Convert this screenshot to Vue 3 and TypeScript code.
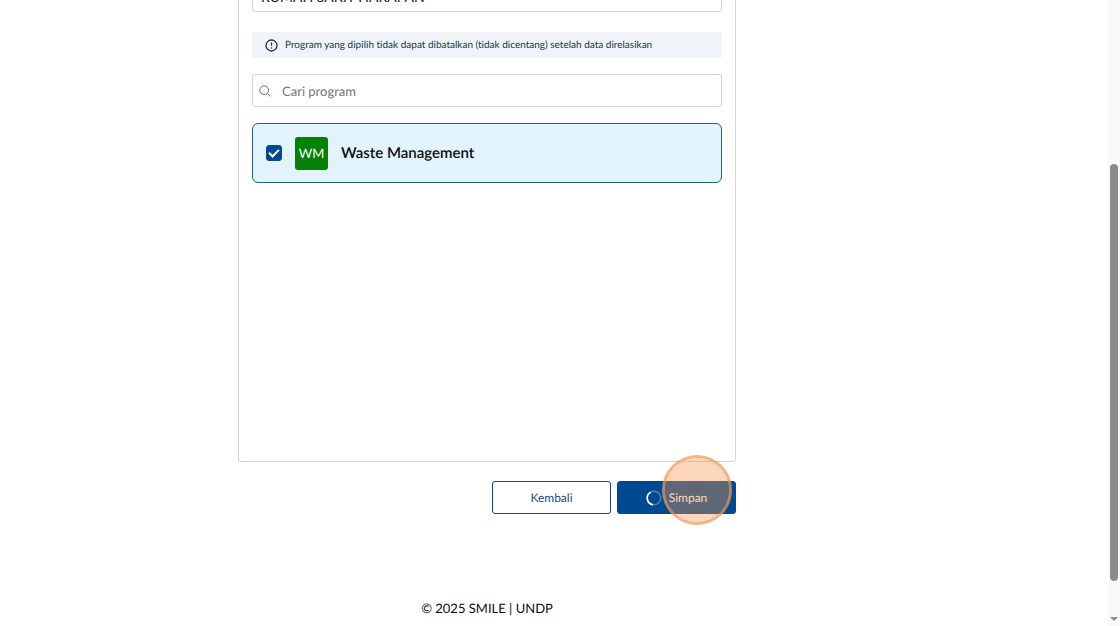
<script setup lang="ts">
import { ref } from 'vue'

interface Program {
  id: number
  code: string
  name: string
  checked: boolean
}

const entity = ref('RUMAH SAKIT HARAPAN')
const keyword = ref('')
const programs = ref<Program[]>([
  { id: 1, code: 'WM', name: 'Waste Management', checked: true },
])
</script>

<template>
  <div class="viewport">
    <main class="page">
      <form class="form" @submit.prevent>
        <section class="panel">
          <input v-model="entity" class="field entity" type="text" aria-label="Nama entitas" />
          <p class="notice">
            <svg class="notice-icon" viewBox="0 0 14 14" aria-hidden="true">
              <circle cx="7" cy="7" r="5.9" />
              <path d="M7 3.8v3.6M7 8.8v1.5" />
            </svg>
            <span>Program yang dipilih tidak dapat dibatalkan (tidak dicentang) setelah data direlasikan</span>
          </p>
          <div class="field search">
            <svg class="search-icon" viewBox="0 0 12 12" aria-hidden="true">
              <circle cx="5.2" cy="5.2" r="4.4" />
              <path d="M8.4 8.4l3 3" />
            </svg>
            <input v-model="keyword" type="text" placeholder="Cari program" aria-label="Cari program" />
          </div>
          <label v-for="program in programs" :key="program.id" class="program">
            <input v-model="program.checked" type="checkbox" />
            <span class="code">{{ program.code }}</span>
            <span class="name">{{ program.name }}</span>
          </label>
        </section>
        <div class="actions">
          <button class="button back" type="button">Kembali</button>
          <button class="button save" type="submit">
            <svg class="spinner" viewBox="0 0 16 16" aria-hidden="true">
              <circle class="track" cx="8" cy="8" r="6.8" />
              <path d="M7 14.7A6.8 6.8 0 0 1 4.6 2.1" />
            </svg>
            <span>Simpan</span>
            <span class="click-marker" aria-hidden="true"></span>
          </button>
        </div>
      </form>
      <footer>© 2025 SMILE | UNDP</footer>
    </main>
    <div class="scrollbar" aria-hidden="true">
      <span class="thumb"></span>
      <span class="arrow"></span>
    </div>
  </div>
</template>

<style>
body {
  margin: 0;
  background: #fff;
}
</style>

<style scoped>
* {
  box-sizing: border-box;
}

.viewport {
  display: flex;
  height: 100vh;
  overflow: hidden;
  font-family: Lato, "Liberation Sans", sans-serif;
  font-variant-ligatures: none;
  text-rendering: geometricPrecision;
  color: #0c0c0c;
}

.page {
  flex: 1;
  min-width: 0;
  padding-left: 238px;
}

.form,
footer {
  width: 100%;
  max-width: 498px;
}

.panel {
  display: flex;
  flex-direction: column;
  height: 483px;
  margin-top: -21px;
  padding: 0 13px;
  border: 1px solid #d4d4d4;
  border-radius: 3px;
}

input,
button {
  font: inherit;
  text-rendering: inherit;
}

.field {
  flex: none;
  width: 100%;
  height: 33px;
  border: 1px solid #d4d4d4;
  border-radius: 3px;
  background: #fff;
}

.field.entity {
  height: 32px;
  padding: 0 8px;
  font-size: 14px;
  color: #222;
}

.notice {
  display: flex;
  align-items: center;
  gap: 7px;
  height: 26px;
  margin: 20px 0 16px;
  padding: 0 13px;
  border-radius: 3px;
  background: #f0f4f9;
  color: #173744;
  font-size: 10px;
}

svg {
  flex: none;
  fill: none;
}

.notice-icon {
  width: 13px;
  height: 13px;
  stroke: #173744;
  stroke-width: 1.4;
}

.search {
  display: flex;
  align-items: center;
  gap: 11px;
  padding: 0 6px;
}

.search-icon {
  width: 12px;
  height: 12px;
  stroke: #6b7280;
}

.search input {
  flex: 1;
  min-width: 0;
  padding: 0;
  border: 0;
  outline: 0;
  background: none;
  font-size: 13px;
}

.search input::placeholder {
  color: #737373;
  opacity: 1;
}

.program {
  display: flex;
  align-items: center;
  gap: 13px;
  height: 60px;
  margin-top: 16px;
  padding: 0 13px;
  border: 1px solid #23608a;
  border-radius: 6px;
  background: #e2f3fc;
}

.program input {
  appearance: none;
  display: grid;
  place-items: center;
  width: 16px;
  height: 16px;
  margin: 0;
  border: 1px solid #004990;
  border-radius: 3px;
}

.program input:checked {
  background: #004990;
}

.program input:checked::after {
  content: "";
  width: 8px;
  height: 4px;
  margin-bottom: 3px;
  border: solid #fff;
  border-width: 0 0 2px 2px;
  transform: rotate(-45deg);
}

.code {
  width: 33px;
  border-radius: 3px;
  background: #068006;
  color: #fff;
  font-size: 13px;
  line-height: 33px;
  text-align: center;
}

.name {
  font-size: 15px;
  font-weight: 600;
}

.actions {
  display: flex;
  justify-content: flex-end;
  gap: 6px;
  margin-top: 19px;
}

.button {
  position: relative;
  display: flex;
  align-items: center;
  justify-content: center;
  gap: 7px;
  width: 119px;
  height: 33px;
  padding: 0;
  border: 1px solid #004990;
  border-radius: 3px;
  font-size: 12px;
}

.back {
  background: #fff;
  color: #1b4f7c;
}

.save {
  background: #004990;
  color: #fff;
}

.spinner {
  width: 16px;
  height: 16px;
  stroke: #fff;
  stroke-width: 1.6;
}

.track {
  stroke: #4780b3;
}

.click-marker {
  position: absolute;
  top: -27px;
  right: 3px;
  width: 70px;
  height: 70px;
  border: 3px solid rgba(240, 154, 90, 0.75);
  border-radius: 50%;
  background: rgba(249, 149, 76, 0.38);
  background-clip: padding-box;
  pointer-events: none;
}

footer {
  margin-top: 84px;
  font-size: 13px;
  line-height: 20px;
  text-align: center;
}

.scrollbar {
  display: flex;
  flex-direction: column;
  align-items: center;
  justify-content: space-between;
  width: 12px;
  padding: 164px 0 5px;
  background: #fafafa;
}

.thumb {
  width: 8px;
  height: 417px;
  border-radius: 4px;
  background: #8b8b8b;
}

.arrow {
  border: 4px solid transparent;
  border-top-color: #8b8b8b;
  border-bottom: 0;
}
</style>
